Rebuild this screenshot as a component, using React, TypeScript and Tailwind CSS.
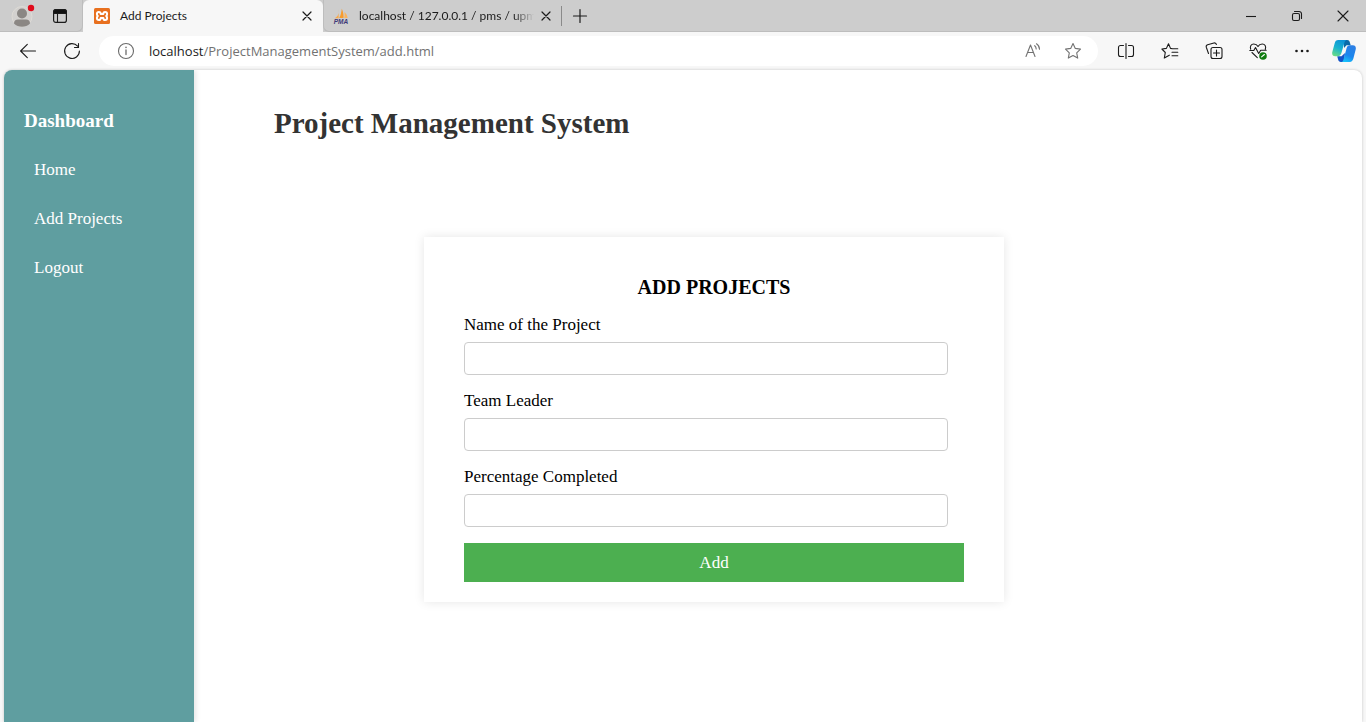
import React from "react";

type IconProps = { children: React.ReactNode; size?: number; stroke?: string; className?: string };

function Icon({ children, size = 18, stroke = "#1b1b1b", className = "" }: IconProps) {
  return (
    <svg
      width={size}
      height={size}
      viewBox={`0 0 ${size} ${size}`}
      fill="none"
      stroke={stroke}
      strokeWidth="1.1"
      strokeLinecap="round"
      strokeLinejoin="round"
      className={`shrink-0 ${className}`}
      aria-hidden="true"
    >
      {children}
    </svg>
  );
}

function CloseIcon() {
  return (
    <Icon size={12} className="h-3 w-3">
      <path d="M2 2l8 8M10 2l-8 8" strokeWidth="1.2" />
    </Icon>
  );
}

function TabStrip() {
  return (
    <div className="flex h-8 items-stretch bg-[#cdcdcd]">
      <div className="flex w-[83px] shrink-0 items-center rounded-br-md border-b border-r border-[#bdbdbd]">
        <button type="button" aria-label="Profile" className="flex w-11 justify-center">
          <svg width="26" height="26" viewBox="0 0 26 26" aria-hidden="true">
            <circle cx="13" cy="13.5" r="10" fill="#d3d1cf" stroke="#dedbd6" />
            <circle cx="13" cy="10.5" r="5" fill="#8b8784" />
            <path d="M5 20.500c0-2.800 1.500-4 4-4h8c2.500 0 4 1.200 4 4-2 2.200-5 3.300-8 3.300s-6-1.100-8-3.300z" fill="#8b8784" />
            <circle cx="22" cy="5" r="3.200" fill="#e00b1c" />
          </svg>
        </button>
        <button type="button" aria-label="Tab actions" className="flex w-8 justify-center">
          <Icon size={16}>
            <rect x="1.600" y="1.600" width="12.800" height="12.800" rx="2.200" strokeWidth="1.200" />
            <path d="M1.600 5.500V3.800a2.200 2.200 0 0 1 2.200-2.200h8.400a2.200 2.200 0 0 1 2.200 2.200v1.700z" fill="#111" />
            <path d="M5.500 5.500v8.900" />
          </Icon>
        </button>
      </div>

      <div className="flex w-60 shrink-0 items-center rounded-t-md bg-[#f7f7f7] pl-[11px] pr-[10px]">
        <svg width="16" height="16" viewBox="0 0 16 16" className="shrink-0" aria-hidden="true">
          <rect width="16" height="16" rx="1.500" fill="#e8701f" />
          <path
            d="M4.900 3.900C6.300 3.900 6.700 4.700 6.700 6h2.600c0-1.300.4-2.100 1.800-2.100s2 .8 2 2c0 1-.4 1.600-.9 2.100.5.500.9 1.100.9 2.100 0 1.200-.6 2-2 2s-1.800-.8-1.800-2.100H6.700c0 1.300-.4 2.100-1.800 2.100s-2-.8-2-2c0-1 .4-1.600.9-2.100-.5-.5-.9-1.100-.9-2.100 0-1.200.6-2 2-2z"
            fill="none"
            stroke="#fff"
            strokeWidth="2"
            strokeLinejoin="round"
          />
        </svg>
        <span className="ml-[10px] flex-1 font-[Lato,'Open_Sans',sans-serif] text-xs text-[#1b1b1b]">Add Projects</span>
        <button type="button" aria-label="Close Add Projects">
          <CloseIcon />
        </button>
      </div>

      <div className="flex w-60 shrink-0 items-center rounded-bl-md border-b border-l border-[#bdbdbd] pl-[9px]">
        <svg width="16" height="16" viewBox="0 0 16 16" className="shrink-0" aria-hidden="true">
          <path d="M5.500 1.500c.4 3.500.1 6.500-3.700 8.700h3.900z" fill="#f9a94a" />
          <path d="M8.800.7c-.5 3.700-1 6.500-2.600 9.400h4.300c.3-3-.3-6.500-1.700-9.400z" fill="#f89c2c" />
          <path d="M11.500 4c1.600 1.500 2.800 3.400 3.200 6h-3.400c.4-2 .5-4 .2-6z" fill="#fbb45c" />
          <text x="8" y="15.600" textAnchor="middle" fontFamily="Liberation Sans, sans-serif" fontSize="6.500" fontWeight="700" fontStyle="italic" fill="#3e3a78">
            PMA
          </text>
        </svg>
        <span className="ml-[10px] w-[175px] whitespace-nowrap font-[Lato,'Open_Sans',sans-serif] text-xs text-[#1b1b1b] [mask-image:linear-gradient(to_right,black_88%,transparent)]">
          localhost / 127.0.0.1 / pms / upm
        </span>
        <button type="button" aria-label="Close localhost" className="ml-[6px]">
          <CloseIcon />
        </button>
        <span className="ml-[9px] h-5 w-px bg-[#8a8a8a]" />
      </div>

      <button type="button" aria-label="New tab" className="flex w-[34px] items-center justify-center border-b border-[#bdbdbd]">
        <Icon size={16}>
          <path d="M8 1.500v13M1.500 8h13" strokeWidth="1.200" />
        </Icon>
      </button>
      <div className="flex flex-1 items-center justify-end border-b border-[#bdbdbd]">
        <button type="button" aria-label="Minimize" className="flex w-[46px] justify-center">
          <Icon size={12}>
            <path d="M1 6.500h10" strokeLinecap="butt" />
          </Icon>
        </button>
        <button type="button" aria-label="Restore" className="flex w-[46px] justify-center">
          <Icon size={12}>
            <rect x="1.500" y="3.500" width="7" height="7" rx="1.500" />
            <path d="M3.500 1.500h4.500a2.500 2.500 0 0 1 2.500 2.500v4.500" />
          </Icon>
        </button>
        <button type="button" aria-label="Close window" className="flex w-[46px] justify-center">
          <Icon size={12}>
            <path d="M1 1l10 10M11 1L1 11" />
          </Icon>
        </button>
      </div>
    </div>
  );
}

function ToolButton({ label, children }: { label: string; children: React.ReactNode }) {
  return (
    <button type="button" aria-label={label} className="flex w-11 shrink-0 items-center justify-center">
      {children}
    </button>
  );
}

function Toolbar() {
  return (
    <div className="flex h-[38px] items-center pl-[6px] pr-[2px]">
      <ToolButton label="Back">
        <Icon>
          <path d="M16.500 9H1.800M8.300 2.300L1.600 9l6.700 6.700" />
        </Icon>
      </ToolButton>
      <ToolButton label="Refresh">
        <Icon>
          <path d="M16.400 9A7.400 7.400 0 1 1 14.600 4.200M15.500 1.500v4h-4" />
        </Icon>
      </ToolButton>
      <div className="ml-[5px] mr-[6px] flex h-[30px] flex-1 items-center rounded-full bg-white pl-[18px] pr-4">
        <Icon stroke="#6b6b6b">
          <circle cx="9" cy="9" r="7.500" />
          <path d="M9 8v4.500" strokeWidth="1.300" />
          <path d="M9 5.300v.2" strokeWidth="1.500" />
        </Icon>
        <div className="ml-[14px] flex-1 text-[13px] leading-5 text-[#727272]">
          <span className="text-[#1b1b1b]">localhost</span>/ProjectManagementSystem/add.html
        </div>
        <button type="button" aria-label="Read aloud" className="mr-[22px]">
          <Icon stroke="#737373">
            <path d="M2 14.500L6.500 3 11 14.500M3.600 10.500h5.800" />
            <path d="M10.700 3.700c1 .8 1.500 1.800 1.500 3.200M12.500 1.800c2 1.300 3 3 3 5.500" />
          </Icon>
        </button>
        <button type="button" aria-label="Add to favorites">
          <Icon stroke="#737373">
            <path d="M9 1.500l2.300 4.900 5.200.7-3.800 3.700 1 5.300L9 13.500l-4.700 2.600 1-5.300L1.500 7.100l5.200-.7z" />
          </Icon>
        </button>
      </div>
      <ToolButton label="Split screen">
        <Icon>
          <path d="M6.500 3.500h-3a2 2 0 0 0-2 2v7a2 2 0 0 0 2 2h3M11.500 3.500h3a2 2 0 0 1 2 2v7a2 2 0 0 1-2 2h-3M9 1.500v15" />
        </Icon>
      </ToolButton>
      <ToolButton label="Favorites">
        <Icon>
          <path d="M11.500 6.800l-2-.4L7.500 1.700 5.400 6.400l-4.500.6 3.400 3.500-1 5.500 5-2.800M11.500 6.800h5.300M11 10.300h5.800M11 13.800h5.800" />
        </Icon>
      </ToolButton>
      <ToolButton label="Collections">
        <Icon>
          <rect x="6" y="5.500" width="11" height="11" rx="2" />
          <path d="M11.500 8v6M8.500 11h6M3.500 11.500L1.300 5.200A2 2 0 0 1 2.600 2.700L8.900 1a2 2 0 0 1 2.500 1.500" />
        </Icon>
      </ToolButton>
      <ToolButton label="Browser essentials">
        <Icon>
          <path d="M1.700 7.300C.6 4.300 2.300 2 4.700 2 6.700 2 8.300 3.200 9 4.500 9.700 3.200 11.300 2 13.300 2c2.500 0 4.100 2.300 3 5.300M3 10.500l5.300 5.200M.8 8.500h4L6.500 5.500l3.200 6 2-3.200h5.500" />
          <circle cx="14" cy="14" r="3.800" fill="#107c10" stroke="none" />
          <path d="M12.600 14.900l2.800-2.400" stroke="#fff" />
        </Icon>
      </ToolButton>
      <ToolButton label="Settings and more">
        <svg width="18" height="18" viewBox="0 0 18 18" fill="#1b1b1b" aria-hidden="true">
          <circle cx="3.500" cy="9" r="1.300" />
          <circle cx="9" cy="9" r="1.300" />
          <circle cx="14.500" cy="9" r="1.300" />
        </svg>
      </ToolButton>
      <button type="button" aria-label="Copilot" className="flex w-10 shrink-0 items-center justify-center">
        <svg width="24" height="22" viewBox="0 0 24 22" aria-hidden="true">
          <defs>
            <linearGradient id="cpA" x1="0.600" y1="0" x2="0.200" y2="1">
              <stop offset="0" stopColor="#0d93d6" />
              <stop offset="0.500" stopColor="#19b3cf" />
              <stop offset="1" stopColor="#6bdc84" />
            </linearGradient>
            <linearGradient id="cpB" x1="0.700" y1="0" x2="0.300" y2="1">
              <stop offset="0" stopColor="#2d7fe4" />
              <stop offset="0.600" stopColor="#1a86ee" />
              <stop offset="1" stopColor="#18c3fb" />
            </linearGradient>
          </defs>
          <path d="M12 0h3.200c1.500 0 2.200.9 2.600 2.200l.9 3.100h-4.200L12 8z" fill="#0a6aa8" />
          <path d="M12 22H8.800c-1.500 0-2.200-.9-2.600-2.200l-1-3.600h4.300L13 13z" fill="#1353c9" />
          <path d="M6.200 0h8.300c-1.200.4-1.700 1.400-2.100 2.800l-3 10.200c-.6 2-1.600 3.200-3.600 3.200H3.200C.8 16.200-.3 14.300.3 12L2.700 3.200C3.300 1.200 4.300 0 6.200 0z" fill="url(#cpA)" />
          <path d="M17.800 22H9.500c1.200-.4 1.700-1.400 2.100-2.800L14.500 8.500c.6-2 1.600-3.200 3.600-3.200h2.700c2.400 0 3.500 1.900 2.900 4.200l-2.400 9.300c-.6 2-1.600 3.200-3.500 3.200z" fill="url(#cpB)" />
        </svg>
      </button>
    </div>
  );
}

const links = ["Home", "Add Projects", "Logout"];

const fields = [
  { id: "name", label: "Name of the Project" },
  { id: "leader", label: "Team Leader" },
  { id: "percent", label: "Percentage Completed" },
];

function Sidebar() {
  return (
    <nav className="w-[190px] shrink-0 bg-[#5f9ea0] px-5 pt-[39px] text-white shadow-[2px_0_5px_rgba(0,0,0,0.1)]">
      <h2 className="text-[19px] leading-6 font-bold">Dashboard</h2>
      <ul className="mt-[25px] flex flex-col gap-[25px] pl-[10px]">
        {links.map((l) => (
          <li key={l} className="text-[17px] leading-6">
            <a href="#" className="block">{l}</a>
          </li>
        ))}
      </ul>
    </nav>
  );
}

function ProjectForm() {
  return (
    <form
      onSubmit={(e) => e.preventDefault()}
      className="ml-[150px] mt-[98px] w-full max-w-[580px] bg-white px-10 pb-5 pt-[38px] text-black shadow-[0_0_10px_rgba(0,0,0,0.1)]"
    >
      <h2 className="mb-4 text-center text-xl leading-6 font-bold">ADD PROJECTS</h2>
      {fields.map((f) => (
        <div key={f.id} className="mb-4 mr-4">
          <label htmlFor={f.id} className="mb-2 block text-[17px] leading-[19px]">
            {f.label}
          </label>
          <input
            id={f.id}
            type="text"
            className="block h-[33px] w-full rounded-[4px] border border-[#cccccc] bg-white px-2"
          />
        </div>
      ))}
      <button type="submit" className="block h-[39px] w-full bg-[#4caf50] text-[17px] text-white">
        Add
      </button>
    </form>
  );
}

export default function App() {
  return (
    <div className="flex min-h-screen flex-col bg-[#f7f7f7] font-['Open_Sans','Noto_Sans',sans-serif]">
      <TabStrip />
      <Toolbar />
      <div className="mx-1 flex flex-1 overflow-hidden rounded-t-lg bg-white font-[Georgia,'Liberation_Serif',serif] shadow-[0_0_3px_rgba(0,0,0,0.2)]">
        <Sidebar />
        <main className="min-w-0 flex-1 pl-20 pt-[37px]">
          <h1 className="text-[29px] leading-8 font-bold text-[#333333]">Project Management System</h1>
          <ProjectForm />
        </main>
      </div>
    </div>
  );
}
